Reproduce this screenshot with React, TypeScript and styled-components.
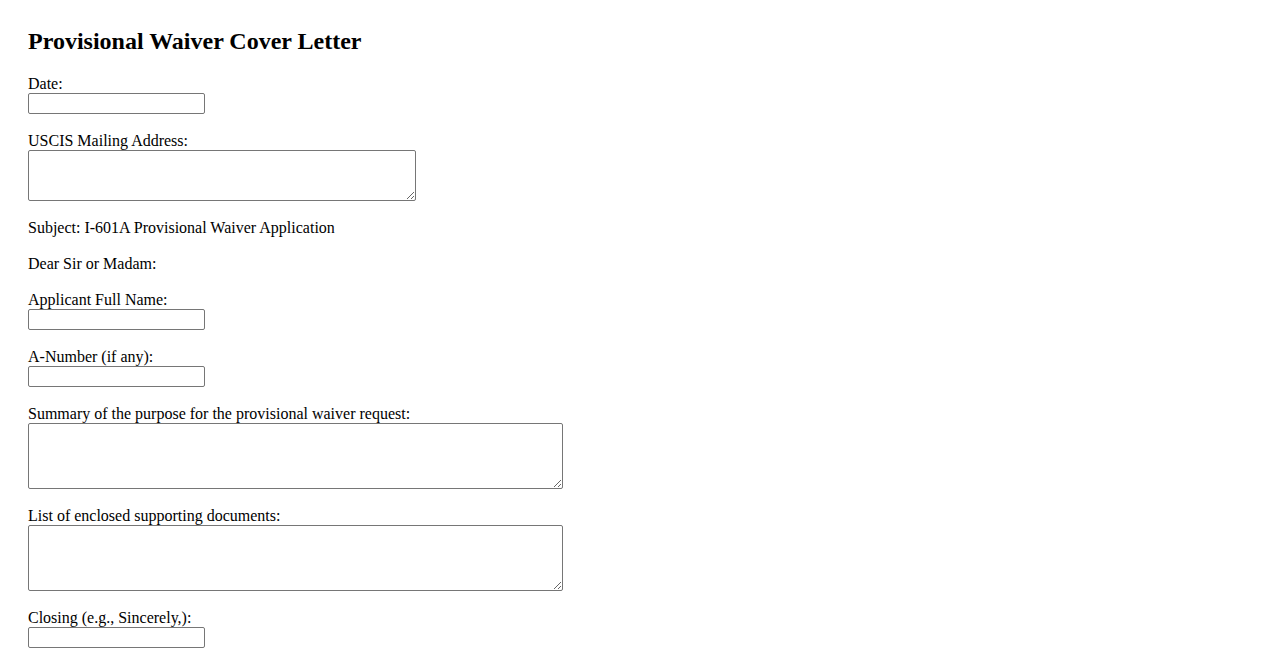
import React from "react";
import styled, { createGlobalStyle } from "styled-components";

const Global = createGlobalStyle`
  html, body { background: #ffffff; }
  body {
    margin: 8px;
    font-family: "Liberation Serif", "Times New Roman", serif;
    font-size: 16px;
    color: #000000;
  }
  * { box-sizing: border-box; }
`;

const Page = styled.form`
  padding: 20px;
  display: flex;
  flex-direction: column;
  align-items: flex-start;
`;

const Title = styled.h2`
  margin: 0 0 21px;
  font-size: 24px;
  line-height: 26px;
  font-weight: bold;
`;

const Field = styled.div`
  display: flex;
  flex-direction: column;
  align-items: flex-start;
  margin-bottom: 18px;
`;

const Label = styled.label`
  display: block;
  line-height: 18px;
  height: 18px;
`;

const Text = styled.p`
  margin: 0 0 18px;
  line-height: 18px;
  height: 18px;
`;

const TextInput = styled.input`
  display: block;
  width: 177px;
  height: 21px;
  margin: 0;
  padding: 1px 2px;
  border: 1px solid #767676;
  border-radius: 2px;
  background: #ffffff;
  font-family: Arial, "Liberation Sans", sans-serif;
  font-size: 13.33px;
`;

const TextArea = styled.textarea<{ $w: number; $h: number }>`
  display: block;
  width: ${(p) => p.$w}px;
  height: ${(p) => p.$h}px;
  margin: 0;
  padding: 2px;
  border: 1px solid #767676;
  border-radius: 2px;
  background: #ffffff;
  font-family: "Liberation Mono", monospace;
  font-size: 13.33px;
  resize: both;
`;

export default function App() {
  return (
    <>
      <Global />
      <Page onSubmit={(e) => e.preventDefault()}>
        <Title>Provisional Waiver Cover Letter</Title>
        <Field>
          <Label htmlFor="date">Date:</Label>
          <TextInput id="date" type="text" />
        </Field>
        <Field>
          <Label htmlFor="address">USCIS Mailing Address:</Label>
          <TextArea id="address" $w={388} $h={51} />
        </Field>
        <Text>Subject: I-601A Provisional Waiver Application</Text>
        <Text>Dear Sir or Madam:</Text>
        <Field>
          <Label htmlFor="name">Applicant Full Name:</Label>
          <TextInput id="name" type="text" />
        </Field>
        <Field>
          <Label htmlFor="anum">A-Number (if any):</Label>
          <TextInput id="anum" type="text" />
        </Field>
        <Field>
          <Label htmlFor="summary">Summary of the purpose for the provisional waiver request:</Label>
          <TextArea id="summary" $w={535} $h={66} />
        </Field>
        <Field>
          <Label htmlFor="docs">List of enclosed supporting documents:</Label>
          <TextArea id="docs" $w={535} $h={66} />
        </Field>
        <Field>
          <Label htmlFor="closing">Closing (e.g., Sincerely,):</Label>
          <TextInput id="closing" type="text" />
        </Field>
      </Page>
    </>
  );
}
